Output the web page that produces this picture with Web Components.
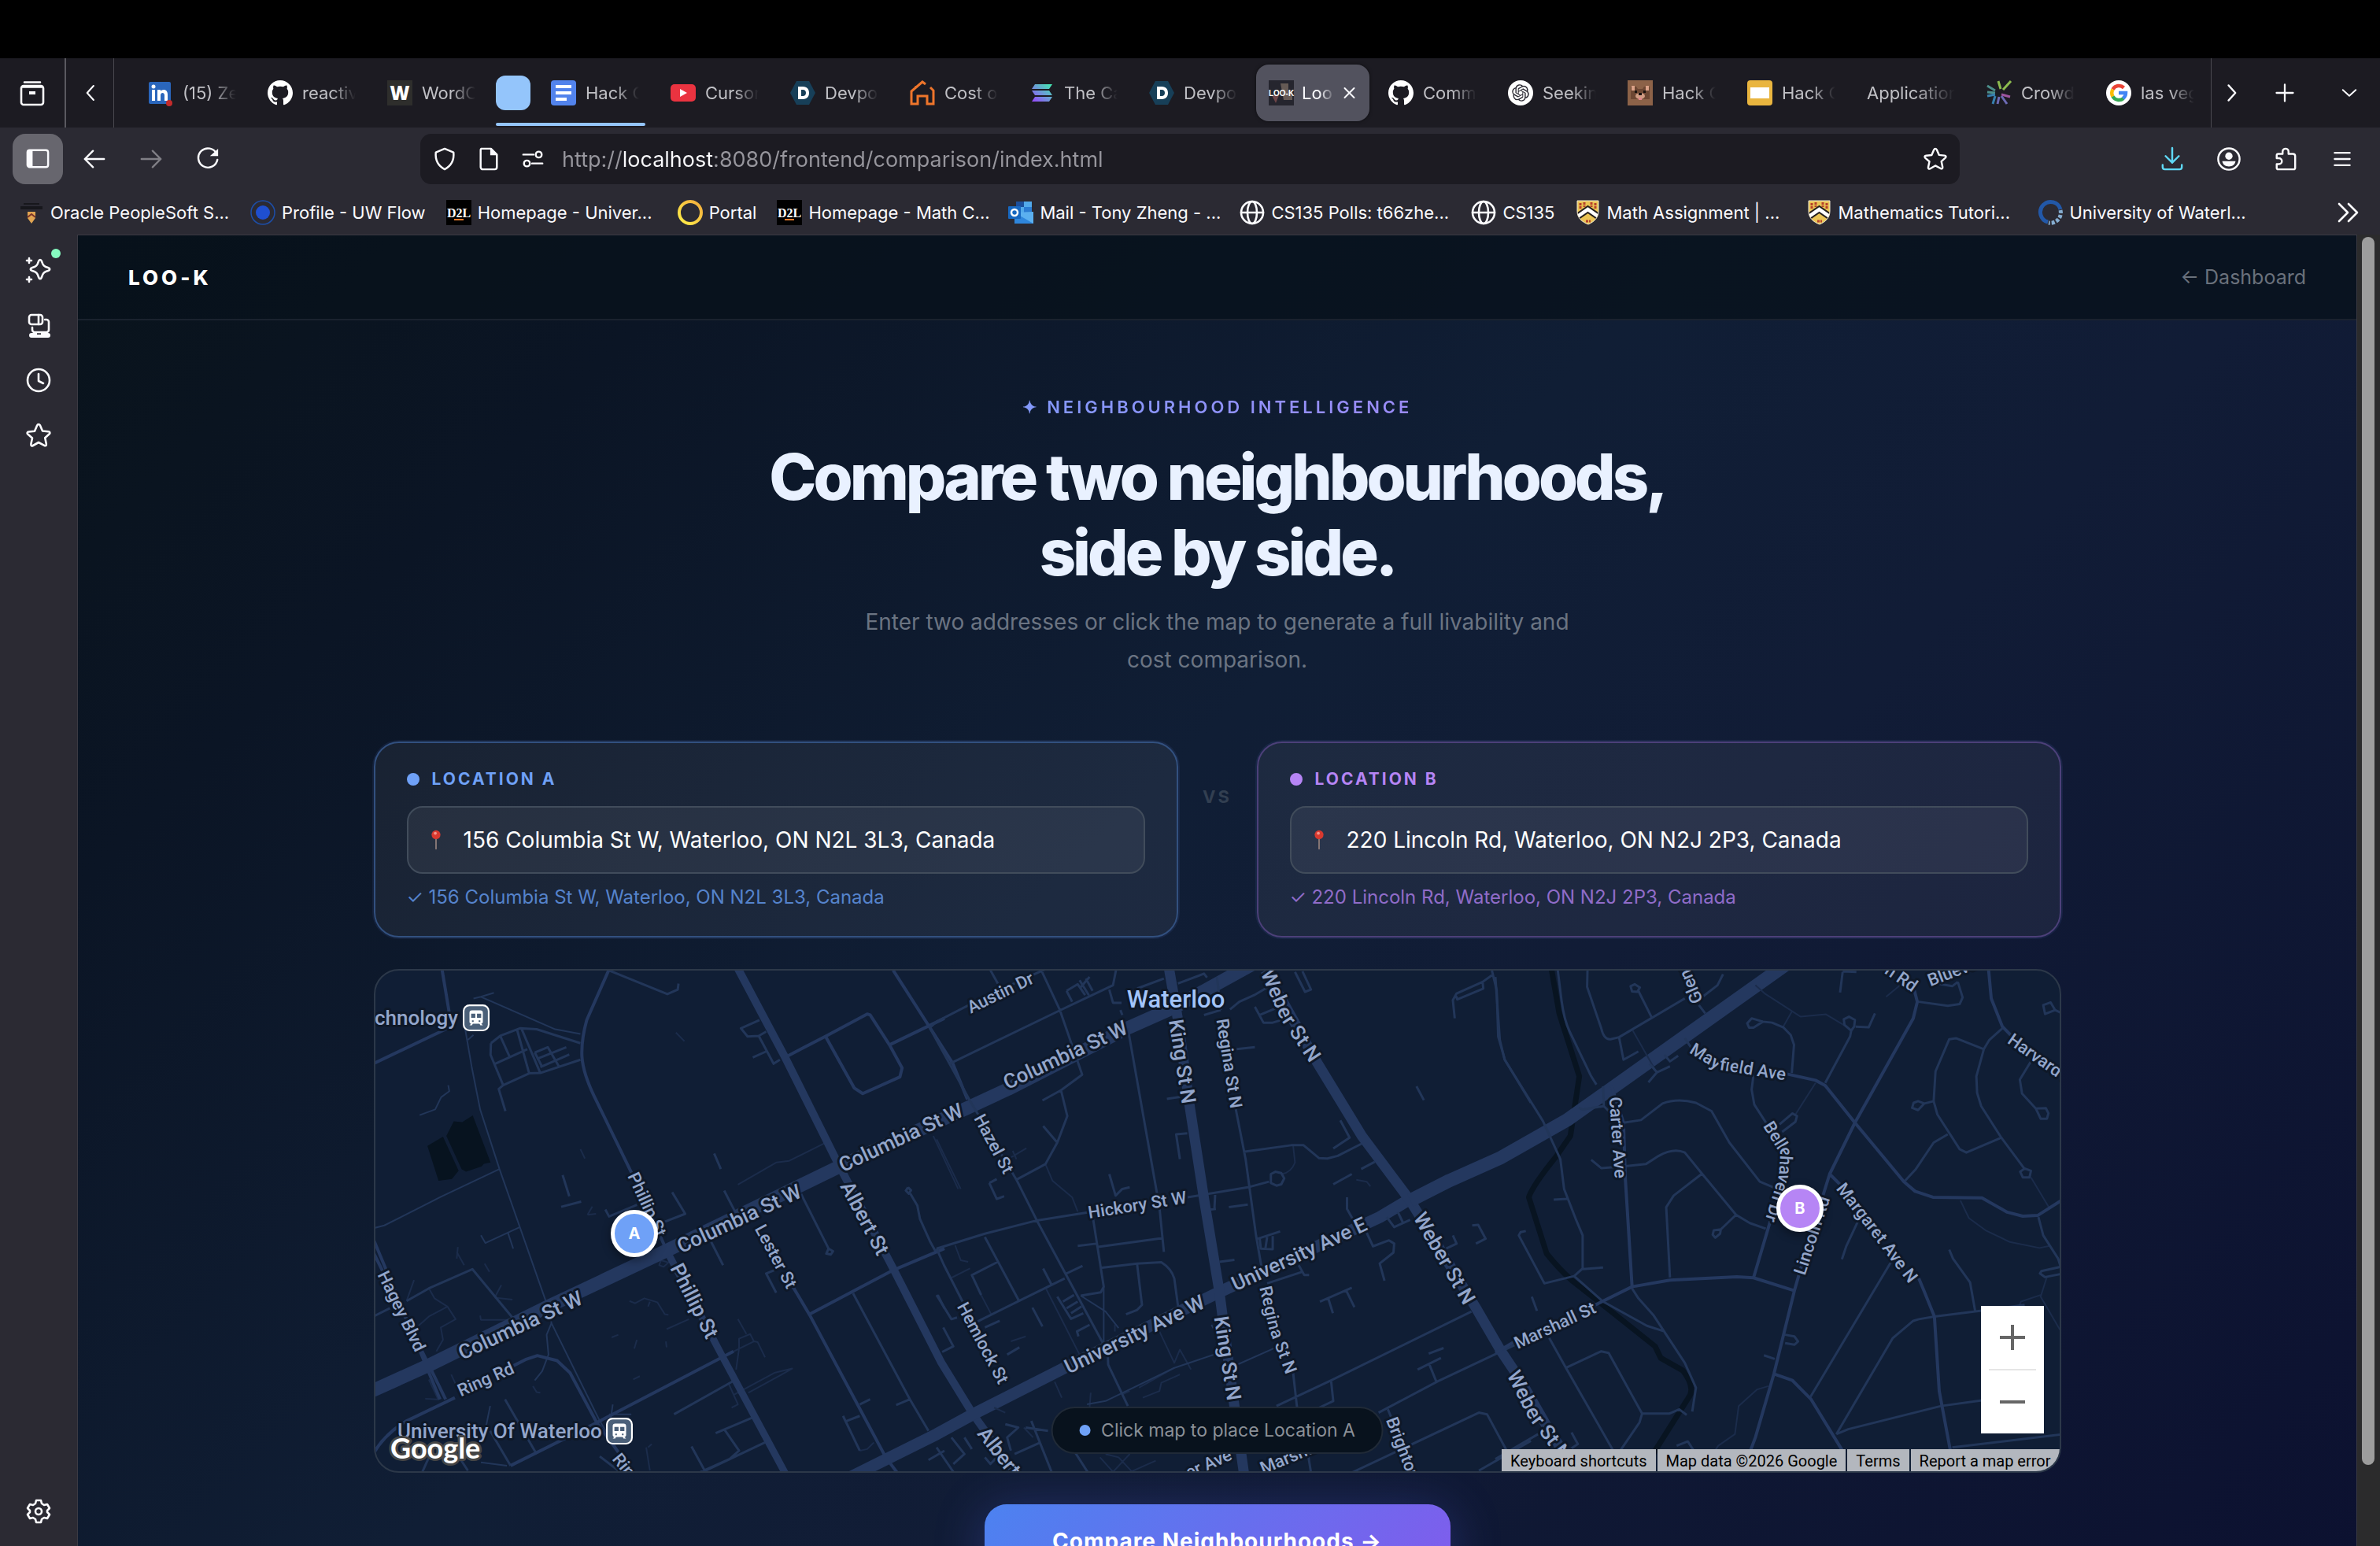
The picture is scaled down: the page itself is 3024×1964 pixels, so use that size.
<!DOCTYPE html>
<html lang="en">
<head>
<meta charset="utf-8">
<title>Loo-K | Compare neighbourhoods</title>
<style>
  html, body {
    margin: 0;
    height: 100%;
    overflow: hidden;
    background: #000;
    font-family: Inter, "Liberation Sans", sans-serif;
    color: #fbfbfe;
  }
</style>
</head>
<body>
<browser-window>
  <tab-strip slot="tabs">
    <tab-item icon="linkedin">(15) Ze</tab-item>
    <tab-item icon="github">reactiv</tab-item>
    <tab-item icon="wordc">WordC</tab-item>
    <tab-group><tab-item icon="docs">Hack C</tab-item></tab-group>
    <tab-item icon="youtube">Cursor</tab-item>
    <tab-item icon="devpost">Devpo</tab-item>
    <tab-item icon="house">Cost o</tab-item>
    <tab-item icon="solana">The Ca</tab-item>
    <tab-item icon="devpost">Devpo</tab-item>
    <tab-item icon="look" selected>Loo</tab-item>
    <tab-item icon="github">Comm</tab-item>
    <tab-item icon="openai">Seekin</tab-item>
    <tab-item icon="bear">Hack C</tab-item>
    <tab-item icon="slides">Hack C</tab-item>
    <tab-item>Application</tab-item>
    <tab-item icon="crowd">Crowd</tab-item>
    <tab-item icon="google">las veg</tab-item>
  </tab-strip>
  <nav-bar slot="nav"></nav-bar>
  <bookmark-bar slot="bookmarks">
    <bookmark-item icon="waterloo" long>Oracle PeopleSoft S...</bookmark-item>
    <bookmark-item icon="uwflow">Profile - UW Flow</bookmark-item>
    <bookmark-item icon="d2l" long>Homepage - Univer...</bookmark-item>
    <bookmark-item icon="portal">Portal</bookmark-item>
    <bookmark-item icon="d2l" long>Homepage - Math C...</bookmark-item>
    <bookmark-item icon="outlook" long>Mail - Tony Zheng - ...</bookmark-item>
    <bookmark-item icon="globe" long>CS135 Polls: t66zhe...</bookmark-item>
    <bookmark-item icon="globe">CS135</bookmark-item>
    <bookmark-item icon="crest" long>Math Assignment | ...</bookmark-item>
    <bookmark-item icon="crest" long>Mathematics Tutori...</bookmark-item>
    <bookmark-item icon="uwring" long>University of Waterl...</bookmark-item>
  </bookmark-bar>
  <side-rail slot="rail"></side-rail>

  <compare-page>
    <location-card slot="a" name="Location A" address="156 Columbia St W, Waterloo, ON N2L 3L3, Canada" style="--accent:#6fa1f7;--edge:#32507f;--note:#5583cc"></location-card>
    <location-card slot="b" name="Location B" address="220 Lincoln Rd, Waterloo, ON N2J 2P3, Canada" style="--accent:#b685f5;--edge:#4c4079;--note:#906cc9"></location-card>
    <city-map slot="map"></city-map>
  </compare-page>
</browser-window>

<script>
// Icons, all on a 32 x 32 grid
const line = 'fill="none" stroke="currentColor" stroke-width="2.6" stroke-linecap="round" stroke-linejoin="round"';
const githubMark = 'M16 0C7.2 0 0 7.2 0 16c0 7.1 4.6 13 10.9 15.200.8.1 1.100-.3 1.100-.8v-3c-4.500 1-5.400-1.900-5.400-1.900-.7-1.900-1.800-2.400-1.800-2.400-1.500-1 .1-1 .1-1 1.600.1 2.500 1.700 2.500 1.700 1.400 2.400 3.800 1.700 4.700 1.300.1-1 .6-1.700 1-2.100-3.600-.4-7.300-1.800-7.300-7.900 0-1.700.6-3.200 1.600-4.300-.2-.4-.7-2 .2-4.200 0 0 1.300-.4 4.400 1.600a15 15 0 0 1 8 0c3.100-2 4.400-1.600 4.400-1.600.9 2.200.3 3.800.2 4.200 1 1.100 1.600 2.600 1.600 4.300 0 6.100-3.700 7.500-7.300 7.900.6.5 1.100 1.500 1.100 3v4.400c0 .5.3 1 1.100.8C27.400 29 32 23.100 32 16 32 7.200 24.800 0 16 0z';
const openaiMark = 'M22.2819 9.8211a5.9847 5.9847 0 0 0-.5157-4.9108 6.0462 6.0462 0 0 0-6.5098-2.9A6.0651 6.0651 0 0 0 4.9807 4.1818a5.9847 5.9847 0 0 0-3.9977 2.9 6.0462 6.0462 0 0 0 .7427 7.0966 5.98 5.98 0 0 0 .511 4.9107 6.051 6.051 0 0 0 6.5146 2.9001A5.9847 5.9847 0 0 0 13.2599 24a6.0557 6.0557 0 0 0 5.7718-4.2058 5.9894 5.9894 0 0 0 3.9977-2.9001 6.0557 6.0557 0 0 0-.7475-7.0729zm-9.022 12.6081a4.4755 4.4755 0 0 1-2.8764-1.0408l.1419-.0804 4.7783-2.7582a.7948.7948 0 0 0 .3927-.6813v-6.7369l2.02 1.1686a.071.071 0 0 1 .038.052v5.5826a4.504 4.504 0 0 1-4.4945 4.4944zm-9.6607-4.1254a4.4708 4.4708 0 0 1-.5346-3.0137l.142.0852 4.783 2.7582a.7712.7712 0 0 0 .7806 0l5.8428-3.3685v2.3324a.0804.0804 0 0 1-.0332.0615L9.74 19.9502a4.4992 4.4992 0 0 1-6.1408-1.6464zM2.3408 7.8956a4.485 4.485 0 0 1 2.3655-1.9728V11.6a.7664.7664 0 0 0 .3879.6765l5.8144 3.3543-2.0201 1.1685a.0757.0757 0 0 1-.071 0l-4.8303-2.7865A4.504 4.504 0 0 1 2.3408 7.872zm16.5963 3.8558L13.1038 8.364 15.1192 7.2a.0757.0757 0 0 1 .071 0l4.8303 2.7913a4.4944 4.4944 0 0 1-.6765 8.1042v-5.6772a.79.79 0 0 0-.407-.667zm2.0107-3.0231l-.142-.0852-4.7735-2.7818a.7759.7759 0 0 0-.7854 0L9.409 9.2297V6.8974a.0662.0662 0 0 1 .0284-.0615l4.8303-2.7866a4.4992 4.4992 0 0 1 6.6802 4.66zM8.3065 12.863l-2.02-1.1638a.0804.0804 0 0 1-.038-.0567V6.0742a4.4992 4.4992 0 0 1 7.3757-3.4537l-.142.0805L8.704 5.459a.7948.7948 0 0 0-.3927.6813zm1.0976-2.3654l2.602-1.4998 2.6069 1.4998v2.9994l-2.5974 1.4997-2.6067-1.4997Z';
const icons = {
  archive: `<path ${line} d="M6 2.500h20M3 8.500h26M5 7h22a3 3 0 0 1 3 3v18a3 3 0 0 1-3 3H5a3 3 0 0 1-3-3V10a3 3 0 0 1 3-3z"/><rect x="12" y="14" width="8" height="4" fill="currentColor"/>`,
  left: `<path ${line} d="M22 5L12 16l10 11"/>`,
  right: `<path ${line} d="M12 5l10 11-10 11"/>`,
  down: `<path ${line} d="M5 11l11 10 11-10"/>`,
  plus: `<path ${line} d="M16 4v24M4 16h24"/>`,
  close: `<path ${line} d="M6 8l16 16M22 8L6 24"/>`,
  sidebar: `<rect x="2" y="4" width="28" height="23" rx="3" ${line}/><path d="M3 5h6v21H3z" fill="currentColor"/>`,
  back: `<path ${line} d="M29 16H3M14 5L3 16l11 11"/>`,
  forward: `<path ${line} d="M3 16h26M18 5l11 11-11 11"/>`,
  reload: `<path ${line} d="M28 9A13 13 0 1 0 29 17"/><path d="M30 2v10H19z" fill="currentColor"/>`,
  shield: `<path ${line} d="M16 2l12 5c1 10-3 18-12 23C7 25 3 17 4 7z"/>`,
  page: `<path ${line} d="M6 2h13l8 8v17a3 3 0 0 1-3 3H8a3 3 0 0 1-3-3V4a2 2 0 0 1 1-2z"/><path d="M18 2v9h9z" fill="currentColor"/>`,
  tune: `<g ${line}><path d="M3 10h14M15 22h14"/><circle cx="24" cy="10" r="4"/><circle cx="8" cy="22" r="4"/></g>`,
  star: `<path ${line} d="M16 2c1 0 1.500.6 2 1.500l3 7 7.500.8c2 .2 2.500 1.700 1.200 3l-5.500 5 1.600 7.500c.4 2-1 3-2.600 2L16 25l-7 4c-1.700 1-3 0-2.600-2L8 19.500l-5.700-5c-1.300-1.300-.8-2.800 1.200-3l7.500-.8 3-7C14.500 2.600 15 2 16 2z"/>`,
  download: `<path ${line} d="M16 1v20M7 12l9 9 9-9M3 24v3a3 3 0 0 0 3 3h20a3 3 0 0 0 3-3v-3"/>`,
  account: `<circle cx="16" cy="16" r="14.500" ${line}/><circle cx="16" cy="12" r="5" fill="currentColor"/><path d="M7 19h18c-1 5-4 7-9 7s-8-2-9-7z" fill="currentColor"/>`,
  puzzle: `<path ${line} d="M12 9V6a4 4 0 0 1 8 0v3h6a3 3 0 0 1 3 3v16a2 2 0 0 1-2 2H6a2 2 0 0 1-2-2v-5h3a4 4 0 0 0 0-8H4v-4a2 2 0 0 1 2-2z"/>`,
  menu: `<path ${line} d="M5 7h22M5 16h22M5 25h22"/>`,
  more: `<path ${line} d="M4 5l11 11L4 27M16 5l11 11-11 11"/>`,
  sparkle: `<path ${line} d="M18 3c1 0 1.500.7 2 2 1.500 5 3 6.500 8 8 3 1 3 3 0 4-5 1.500-6.500 3-8 8-1 3-3 3-4 0-1.500-5-3-6.500-8-8-3-1-3-3 0-4 5-1.500 6.500-3 8-8 .5-1.300 1-2 2-2z"/><path ${line} stroke-width="2" d="M4 1v6M1 4h6M4 25v6M1 28h6"/>`,
  devices: `<g ${line}><rect x="4" y="3" width="17" height="12" rx="3"/><path d="M16 3v12M24 9h2a3 3 0 0 1 3 3v10a3 3 0 0 1-3 3H11a3 3 0 0 1-3-3v-3"/></g><path d="M7 26h7v2h5v-2h9a3 3 0 0 1 0 6H7a3 3 0 0 1 0-6z" fill="currentColor"/>`,
  clock: `<circle cx="16" cy="16" r="14" ${line}/><path ${line} d="M16 8v9l6 3"/>`,
  gear: `<path ${line} d="M13 2h6l1 4 3 2 4-1 3 5-3 3v2l3 3-3 5-4-1-3 2-1 4h-6l-1-4-3-2-4 1-3-5 3-3v-2l-3-3 3-5 4 1 3-2z"/><circle cx="16" cy="16" r="4" ${line}/>`,
  globe: `<g ${line}><circle cx="16" cy="16" r="14"/><ellipse cx="16" cy="16" rx="6" ry="14"/><path d="M2 16h28"/></g>`,
  linkedin: `<rect x="1" y="2" width="28" height="28" rx="2" fill="#2a66bc"/><path fill="#fff" d="M5 12h4v14H5zM12 12h4v2c2-3 9-3 9 4v8h-4v-7c0-4-5-4-5 0v7h-4z"/><circle cx="7" cy="8" r="2.500" fill="#fff"/><circle cx="27" cy="29" r="4" fill="#c42b2b"/>`,
  github: `<path fill="#fff" d="${githubMark}"/>`,
  wordc: `<rect width="32" height="32" fill="#2e2e2c"/><text x="16" y="25" text-anchor="middle" font-family="Open Sans" font-weight="800" font-size="24" fill="#fff">W</text>`,
  docs: `<rect width="32" height="32" rx="4" fill="#5283ec"/><path fill="#fff" d="M6 6h20v4H6zM6 14h20v4H6zM6 22h14v4H6z"/>`,
  youtube: `<rect y="5" width="32" height="22" rx="5" fill="#ea3340"/><path fill="#fff" d="M12 11l9 5-9 5z"/>`,
  devpost: `<path fill="#173f58" d="M8 1h16l8 15-8 15H8L0 16z"/><path fill="#fff" fill-rule="evenodd" d="M10 8h6c6 0 8 4 8 8s-2 8-8 8h-6zM14 12v8h2c3 0 4-2 4-4s-1-4-4-4z"/>`,
  house: `<path fill="none" stroke="#ee752b" stroke-width="3" d="M8 10V7M20 5l-4-3L2 14v16h8V20h12v10h8V13l-4-4"/>`,
  solana: `<linearGradient id="g" x1="0" y1="1" x2="1" y2="0"><stop stop-color="#9945ff"/><stop offset="1" stop-color="#3ff0ae"/></linearGradient><path fill="url(#g)" d="M7 5h22l-4 6H3zM3 13h22l4 6H7zM7 21h22l-4 6H3z"/>`,
  look: `<rect width="32" height="32" fill="#25252e"/><path fill="#655a55" d="M15 4h10v9h5v12H19z"/><path fill="#6e4548" d="M4 19h9l-4 10z"/><text x="16" y="20" text-anchor="middle" font-family="Liberation Sans" font-weight="700" font-size="10" fill="#fff">LOO-K</text>`,
  openai: `<circle cx="16" cy="16" r="16" fill="#fff"/><path fill="#2b2a33" transform="translate(5.200 5.200) scale(.9)" d="${openaiMark}"/>`,
  bear: `<rect width="32" height="32" fill="#8c6248"/><path fill="#6d4733" d="M4 8h7l2 3h6l2-3h7v16H4z"/><path fill="#dba288" d="M5 7h4v6H5zM23 7h4v6h-4z"/><ellipse cx="16" cy="20" rx="6" ry="4" fill="#d19c84"/><path fill="#1a1210" d="M9 13h3v3H9zM20 13h3v3h-3zM14 16h4v3h-4z"/><path fill="#e0868a" d="M14 22h4v3h-4z"/>`,
  slides: `<rect width="32" height="32" rx="4" fill="#e9b53f"/><path fill="#fff" d="M4 9h24v14H4z"/>`,
  crowd: `<g stroke-width="3"><path stroke="#8dbb4f" d="M18 11l-3-10M21 12L31 1"/><path stroke="#4c8f8c" d="M1 7l10 6M1 15l10 1"/><path stroke="#377fae" d="M1 20l10-2M8 30l3-10"/><path stroke="#6d6bb5" d="M14 30l2-9M26 30l-7-10"/><path stroke="#9d559f" d="M19 18l11 3"/></g>`,
  google: `<circle cx="16" cy="16" r="16" fill="#fff"/><g fill="none" stroke-width="4.500"><path stroke="#ea4335" d="M8.500 11.500a9 9 0 0 1 14-2"/><path stroke="#fbbc05" d="M8.500 20.500a9 9 0 0 1 0-9"/><path stroke="#34a853" d="M22 23a9 9 0 0 1-13.500-2.500"/><path stroke="#4285f4" d="M16 16h9a9 9 0 0 1-3.500 7"/></g>`,
  waterloo: `<path fill="#17171c" d="M2 8h28v4H2zM6 4h20v2H6z"/><path fill="#e0a452" d="M11 15h10v8l-5 7-5-7z"/><path fill="none" stroke="#7d3528" stroke-width="2" d="M11 22l5-4 5 4"/>`,
  uwflow: `<circle cx="16" cy="16" r="15" fill="none" stroke="#1d4ea8" stroke-width="1.500"/><circle cx="16" cy="16" r="9" fill="#1f4fd0"/>`,
  d2l: `<rect width="32" height="32" fill="#000"/><text x="16" y="22" text-anchor="middle" font-family="Liberation Serif" font-weight="700" font-size="16" fill="#fff">D2L</text><path fill="#e87b2c" d="M10 24h12v2H10z"/>`,
  portal: `<linearGradient id="p" x1="0" y1="1" x2="1" y2="0"><stop stop-color="#fff04a"/><stop offset="1" stop-color="#f2ab3c"/></linearGradient><circle cx="16" cy="16" r="14" fill="none" stroke="url(#p)" stroke-width="4"/>`,
  outlook: `<path fill="#1c4f9c" d="M10 2h20v14H10z"/><path fill="#52a9ea" d="M20 2h10v7H20zM10 9h10v7H10z"/><path fill="#2b7cd3" d="M20 9h10v7H20z"/><path fill="#5bb0f0" d="M8 16l24-1v15H8z"/><path fill="#2f86dc" d="M8 16l24 14H8z"/><rect y="8" width="16" height="16" rx="1" fill="#1767c0"/><circle cx="8" cy="16" r="4" fill="none" stroke="#fff" stroke-width="2.500"/>`,
  crest: `<clipPath id="c"><path d="M2 1h27v13c0 9-6 14-13 17C8 28 2 23 2 14z"/></clipPath><g clip-path="url(#c)"><path fill="#eac454" d="M0 0h32v32H0z"/><path fill="none" stroke="#b5402c" stroke-width="3" stroke-dasharray="3 1" d="M6 4v8M11 3v6M20 3v6M25 4v8M13 27h6"/><path fill="none" stroke="#fff" stroke-width="7" d="M1 22l14.500-10L30 22"/><path fill="none" stroke="#26211d" stroke-width="2" d="M1 18l14.500-10L30 18M1 26l14.500-10L30 26"/></g><path fill="none" stroke="#f3ead0" d="M2 1h27v13c0 9-6 14-13 17C8 28 2 23 2 14z"/>`,
  uwring: `<g fill="none" stroke-width="5"><path stroke="#2258a8" d="M12 28A13 13 0 1 1 28 12"/><path stroke="#86add0" stroke-dasharray="4 2" d="M28 13a13 13 0 0 1-15 16"/></g>`,
  rail: `<rect x="1" y="1" width="30" height="30" rx="7" fill="#4b6079" stroke="#fff" stroke-width="2"/><path fill="#fff" fill-rule="evenodd" d="M11 7h10c2 0 3 1 3 3v11c0 1-1 2-2 2l2 2h-3l-1-2h-8l-1 2H8l2-2c-1 0-2-1-2-2V10c0-2 1-3 3-3zm-1 4v5h5v-5zm7 0v5h5v-5zm-6 8v2h2v-2zm8 0v2h2v-2z"/>`,
  pin: `<path stroke="#8b7a78" stroke-width="2" stroke-linecap="round" d="M16 15v13"/><circle cx="16" cy="9" r="6" fill="#d8392f"/><circle cx="15" cy="7" r="2" fill="#f3938a"/>`
};

/**
 * Defines a custom element whose shadow root is filled by a render function.
 */
function define(name, render) {
  customElements.define(name, class extends HTMLElement {
    constructor() {
      super();
      this.attachShadow({ mode: 'open' });
    }
    connectedCallback() {
      this.shadowRoot.innerHTML = render(this);
    }
  });
}

define('ui-icon', el => `
  <style>
    :host { display: block; flex: none; width: var(--icon, 32px); height: var(--icon, 32px); }
    svg { display: block; width: 100%; height: 100%; overflow: visible; }
  </style>
  <svg viewBox="0 0 32 32" aria-hidden="true">${icons[el.getAttribute('name')]}</svg>`);

// Icon-only button
define('icon-button', el => `
  <style>
    :host { display: block; flex: none; width: 72px; }
    button { all: unset; box-sizing: border-box; display: grid; place-items: center; width: 100%; height: 64px; border-radius: 16px; color: inherit; }
    :host([pressed]) button { background: #67666e; }
  </style>
  <button aria-label="${el.getAttribute('label')}"><ui-icon name="${el.getAttribute('icon')}"></ui-icon></button>`);

define('browser-window', () => `
  <style>
    :host { display: grid; grid-template-rows: 74px 88px 80px 56px minmax(0, 1fr); height: 100vh; background: #2b2a33; }
    .notch { background: #000; }
    .main { display: grid; grid-template-columns: 98px minmax(0, 1fr) 29px; min-height: 0; }
    .view { overflow: hidden; border: 1px solid #3b3a43; border-bottom: 0; }
    .scroll { background: #2b2b2c; padding: 3px 6px; }
    .thumb { height: 94%; border-radius: 8px; background: #9d9d9d; width: 16px; }
  </style>
  <div class="notch"></div>
  <slot name="tabs"></slot>
  <slot name="nav"></slot>
  <slot name="bookmarks"></slot>
  <div class="main">
    <slot name="rail"></slot>
    <div class="view"><slot></slot></div>
    <div class="scroll"><div class="thumb"></div></div>
  </div>`);

define('tab-strip', () => `
  <style>
    :host { display: flex; align-items: stretch; background: #1c1b22; }
    .end { display: flex; align-items: center; }
    .all { border-right: 2px solid #5a5960; padding: 0 5px; }
    .all icon-button { width: 72px; }
    .prev { border-right: 1px solid #4a4950; }
    .prev icon-button { width: 60px; --icon: 26px; }
    .tabs { flex: 1; min-width: 0; display: flex; padding-left: 23px; }
    .tools { border-left: 1px solid #4a4950; --icon: 28px; }
    .next { width: 50px; }
    .new { width: 86px; }
    .list { width: 78px; --icon: 24px; }
  </style>
  <div class="end all"><icon-button icon="archive" label="Firefox View"></icon-button></div>
  <div class="end prev"><icon-button icon="left" label="Scroll tabs left"></icon-button></div>
  <div class="tabs" role="tablist"><slot></slot></div>
  <div class="end tools">
    <icon-button class="next" icon="right" label="Scroll tabs right"></icon-button>
    <icon-button class="new" icon="plus" label="New tab"></icon-button>
    <icon-button class="list" icon="down" label="List all tabs"></icon-button>
  </div>`);

define('tab-item', el => {
  const icon = el.getAttribute('icon');
  const selected = el.hasAttribute('selected');
  return `
  <style>
    :host { display: block; flex: 0 1 152px; min-width: 0; padding: 8px 4px; box-sizing: border-box; width: 152px; }
    .tab { all: unset; box-sizing: border-box; width: 100%; height: 72px; display: flex; align-items: center; gap: 12px; padding: 0 16px; border-radius: 16px; font-size: 22px; color: #c0c0c5; }
    .label { flex: 1; min-width: 0; overflow: hidden; white-space: nowrap; -webkit-mask-image: linear-gradient(90deg, #000 55%, transparent); mask-image: linear-gradient(90deg, #000 55%, transparent); }
    :host([selected]) .tab { background: #52525e; color: #fbfbfe; gap: 8px; padding-right: 12px; box-shadow: 0 0 4px #0008; }
    :host([selected]) .label { padding-left: 2px; }
    .x { --icon: 24px; }
  </style>
  <button class="tab" role="tab" aria-selected="${selected}">
    ${icon ? `<ui-icon name="${icon}"></ui-icon>` : ''}
    <span class="label"><slot></slot></span>
    ${selected ? '<ui-icon class="x" name="close"></ui-icon>' : ''}
  </button>`;
});

define('tab-group', () => `
  <style>
    :host { display: flex; align-items: center; position: relative; padding-left: 6px; }
    button { all: unset; width: 44px; height: 44px; border-radius: 12px; margin-right: 6px; background: #94c5fb; }
    :host::after { content: ""; position: absolute; left: 6px; right: 12px; bottom: 2px; height: 4px; border-radius: 2px; background: #94c5fb; }
  </style>
  <button aria-label="Tab group"></button><slot></slot>`);

define('nav-bar', () => `
  <style>
    :host { display: flex; align-items: center; padding: 0 12px 0 16px; --icon: 30px; }
    .side { width: 64px; margin-right: 4px; }
    .off { color: #807f86; }
    .url { flex: 1; margin: 0 234px; height: 64px; border-radius: 14px; background: #1c1b22; display: flex; align-items: center; gap: 26px; padding: 0 16px; }
    .url input { all: unset; flex: 1; min-width: 0; height: 64px; font-size: 27px; color: transparent; margin-left: -4px;
      background: linear-gradient(90deg, #97969d 76px, #fbfbfe 76px 192px, #97969d 192px); -webkit-background-clip: text; background-clip: text; }
    .dl { color: #5fd8f5; }
    .menu { --icon: 28px; }
  </style>
  <icon-button class="side" pressed icon="sidebar" label="Show sidebar"></icon-button>
  <icon-button icon="back" label="Back"></icon-button>
  <icon-button class="off" icon="forward" label="Forward"></icon-button>
  <icon-button icon="reload" label="Reload"></icon-button>
  <div class="url">
    <ui-icon name="shield"></ui-icon>
    <ui-icon name="page"></ui-icon>
    <ui-icon name="tune"></ui-icon>
    <input aria-label="Address" value="http://localhost:8080/frontend/comparison/index.html">
    <ui-icon name="star"></ui-icon>
  </div>
  <icon-button class="dl" icon="download" label="Downloads"></icon-button>
  <icon-button icon="account" label="Account"></icon-button>
  <icon-button icon="puzzle" label="Extensions"></icon-button>
  <icon-button class="menu" icon="menu" label="Open menu"></icon-button>`);

define('bookmark-bar', () => `
  <style>
    :host { display: flex; align-items: center; padding: 0 4px 0 24px; }
    nav { flex: 1; min-width: 0; display: flex; gap: 26px; }
  </style>
  <nav aria-label="Bookmarks"><slot></slot></nav>
  <icon-button icon="more" label="More bookmarks"></icon-button>`);

// "long" titles are the ones cut at the widest label the bar allows
define('bookmark-item', el => `
  <style>
    :host { display: block; flex: none; }
    a { display: flex; align-items: center; gap: 8px; color: #fbfbfe; text-decoration: none; font-size: 22px; line-height: 32px; white-space: nowrap; }
    :host([long]) span { width: 228px; }
  </style>
  <a href="#"><ui-icon name="${el.getAttribute('icon')}"></ui-icon><span><slot></slot></span></a>`);

define('side-rail', () => `
  <style>
    :host { display: flex; flex-direction: column; padding: 10px 0 9px; box-sizing: border-box; }
    .item { height: 70px; display: grid; place-items: center; position: relative; }
    .item:last-child { margin-top: auto; }
    .dot { position: absolute; right: 21px; top: 8px; width: 12px; height: 12px; border-radius: 50%; background: #86fbc0; }
  </style>
  <div class="item"><icon-button icon="sparkle" label="AI chat"></icon-button><span class="dot"></span></div>
  <div class="item"><icon-button icon="devices" label="Synced tabs"></icon-button></div>
  <div class="item"><icon-button icon="clock" label="History"></icon-button></div>
  <div class="item"><icon-button icon="star" label="Bookmarks"></icon-button></div>
  <div class="item"><icon-button icon="gear" label="Customize sidebar"></icon-button></div>`);

define('compare-page', () => `
  <style>
    :host { display: block; min-height: 100%; background: linear-gradient(135deg, #09131b 0%, #0b1525 18%, #101e35 45%, #111c36 62%, #0c1130 100%); }
    header { height: 106px; display: flex; align-items: center; justify-content: space-between; padding: 0 64px; border-bottom: 2px solid #1a222e; background: rgba(7, 17, 27, .8); }
    .logo { font-size: 26px; font-weight: 800; letter-spacing: 4px; color: #fff; }
    header a { font-size: 25px; color: #6a717c; text-decoration: none; }
    .hero { padding-top: 96px; text-align: center; }
    .eyebrow { margin: 0; font-size: 22px; line-height: 28px; font-weight: 600; letter-spacing: 4px; }
    .eyebrow span { background: linear-gradient(90deg, #8399fb, #9b8bf7); -webkit-background-clip: text; background-clip: text; color: transparent; }
    h1 { margin: 27px auto 16px; font-size: 81px; line-height: 96px; font-weight: 800; letter-spacing: -4px; color: #e9f1ff; }
    .lead { margin: 0 auto; max-width: 960px; font-size: 28px; line-height: 48px; color: #6b7482; }
    main { max-width: 2144px; margin: 80px auto 0; }
    .pair { display: grid; grid-template-columns: 1fr 100px 1fr; }
    .vs { text-align: center; padding-top: 56px; font-size: 22px; line-height: 28px; font-weight: 700; letter-spacing: 3px; color: #323f51; }
    .go { display: flex; justify-content: center; margin-top: 40px; }
    .go button { border: 0; width: 592px; height: 94px; border-radius: 28px; font: 700 28px/34px Inter, sans-serif; letter-spacing: 1px; color: #fff; background: linear-gradient(135deg, #4c82f0, #805cec); box-shadow: 0 8px 64px rgba(90, 100, 240, .3); }
  </style>
  <header><span class="logo">LOO-K</span><a href="#">← Dashboard</a></header>
  <section class="hero">
    <p class="eyebrow"><span>✦ NEIGHBOURHOOD INTELLIGENCE</span></p>
    <h1>Compare two neighbourhoods,<br>side by side.</h1>
    <p class="lead">Enter two addresses or click the map to generate a full livability and<br>cost comparison.</p>
  </section>
  <main>
    <div class="pair"><slot name="a"></slot><div class="vs">VS</div><slot name="b"></slot></div>
    <slot name="map"></slot>
    <div class="go"><button>Compare Neighbourhoods →</button></div>
  </main>`);

define('location-card', el => `
  <style>
    :host { display: block; box-sizing: border-box; border: 2px solid var(--edge); border-radius: 32px; padding: 32px 40px 35px; background: rgba(255, 255, 255, .055); box-shadow: 0 0 0 2px rgba(100, 130, 230, .1); }
    label { display: flex; align-items: center; gap: 16px; font-size: 21px; line-height: 28px; font-weight: 700; letter-spacing: 3px; color: var(--accent); text-transform: uppercase; }
    label::before { content: ""; width: 16px; height: 16px; border-radius: 50%; background: var(--accent); }
    .field { display: flex; align-items: center; gap: 20px; height: 82px; margin: 20px 0 16px; padding: 0 20px; border: 2px solid #414c5b; border-radius: 20px; background: rgba(255, 255, 255, .06); --icon: 30px; }
    input { all: unset; flex: 1; min-width: 0; font-size: 28px; color: #fff; }
    p { margin: 0; font-size: 24px; line-height: 28px; color: var(--note); }
  </style>
  <label for="address">${el.getAttribute('name')}</label>
  <div class="field"><ui-icon name="pin"></ui-icon><input id="address" value="${el.getAttribute('address')}"></div>
  <p>✓ ${el.getAttribute('address')}</p>`);

// The map is drawn in three tiles, each 740 x 660 and plotted on a 1568 grid
const TILE = [460, 1190, 1900];
const SX = 740 / 1568, SY = 660 / 1568;
const at = (tile, x, y) => [Math.round(TILE[tile] + x * SX), Math.round(1220 + y * SY)];

// Per tile: streets by stroke width, then the faint service lanes
const roads = [
  [{
    17: 'M-10 1318L180 1222 500 1045 822 875 1280 625 1640 440 1740 388 2060 205 2190 140 2400 10',
    10: 'M1005 10L1140 295 1280 610 1430 930 1560 1215 1645 1370 1780 1580',
    9: 'M822 880L970 1195 1145 1560',
    15: 'M1300 1568L1547 1430 1645 1370 1900 1225 2310 1000 2740 775 2815 725',
    4: 'M215 25L238 180 225 208 30 312M664 30L605 180Q590 240 592 290 595 340 625 410L725 640 822 880M30 840L210 1325M30 880L175 1210 225 1325M30 1490Q60 1430 120 1390L250 1320M405 1225L440 1205 472 1193 525 1208 560 1245 632 1395 700 1500M632 1395L1000 1180M632 1395L400 1525M1160 985L1205 1070 1410 1500 1440 1545M1205 1068L1430 935 1568 870M1140 292L1250 228 1360 162 1368 165 1420 255 1454 325 1448 352 1348 402 1325 385 1248 230M1420 255L1568 175M1430 30L1590 310 1630 420',
    3: 'M120 1028L180 990 297 932 410 1085M664 30L822 102 850 88 852 70M347 250L372 228 425 205 470 208 588 250M347 250L346 285 380 377 450 341 480 340 588 300M372 228L397 290M355 314L445 268M418 212L450 341M430 208L480 340M380 377L368 388 386 455M465 278L500 262 530 320M470 298L550 262M480 322L558 284M465 278L485 322M835 700L870 765 812 790M655 752L665 773 740 738M540 648L558 712M536 744L590 728M948 583L966 630M975 695L1005 760M1182 705L1256 870 1250 885 1262 888 1268 878 1256 870M1470 685L1464 695 1472 704 1478 694 1470 685M1476 704L1495 740 1502 780 1530 850 1545 880M940 850L972 920M1115 1003L1088 945 1110 935M1070 180L1020 205 1038 230 1068 228 1108 312 1125 300M1068 228L1088 215M1052 293L1088 275M840 1370L1002 1268M952 1427L1055 1378M975 1415L1015 1480 990 1505 880 1560M887 1467L925 1545M1295 1375L1340 1480M1305 1390L1340 1375M1340 1340L1368 1325M1438 1342L1475 1325M1322 1005L1475 1325 1525 1420M1550 1010L1568 1050M640 1497L690 1540M385 1325L470 1490M345 1420L400 1525M160 1550L180 1500M250 1480L285 1540M925 1540L1085 1455M1525 1508L1568 1480M30 1075L75 1050',
    2: 'M275 190L295 320 318 450 370 630 500 1045 510 1095 640 1390 700 1500M32 808L60 800 210 715 370 630M320 830L332 853 425 805M393 823L407 870M320 110L520 208 588 222M320 110L355 98M300 115L320 110M285 240L300 225M510 1095L497 1130 502 1190 485 1240 465 1268M155 467L197 450 213 413 235 395 232 377M320 1515L390 1525M345 1345L335 1400 310 1440M675 1340L670 1380M665 1370L725 1370'
  },
  'M180 990L195 1020 230 1045 252 1083 212 1108 218 1145 200 1180M230 1045L180 1075 150 1105M357 1018L375 980M357 1018L405 1024M255 900L258 865M255 880L275 920M140 965L120 1028M318 1072L320 1085 400 1085M330 915L343 940M1012 677L1115 610 1150 605 1245 552M845 218L868 244M588 570L600 598M720 1028L735 1035 760 1020 795 1032 815 1068 825 1070M775 1030L770 1045M820 1113L880 1083M975 1195L1015 1172 1055 1150 1065 1152 1085 1198M1015 1172L1015 1142 1045 1128 1055 1150M1015 1172L1007 1235M1012 1083L1035 1128M1000 1312L1110 1245 1158 1232 1130 1250 1040 1305M988 1280L1012 1340 995 1350M740 1145L733 1172M818 1150L820 1168M672 1138L690 1130M730 1265L748 1255M765 1470L775 1540M770 1470L780 1460M180 1265L205 1325 170 1323M240 1250L265 1310M460 1285L470 1303 480 1305M607 768L630 765M607 768L620 743M1538 530L1605 690M1340 1480L1360 1475 1378 1455M800 920L812 925 825 912 805 905z'
  ],
  [{
    13: 'M625 20L650 180 680 430 720 720 760 990 800 1330 830 1568M885 30L1020 300 1145 530 1275 725 1450 1045 1520 1180 1568 1260 1650 1420 1750 1590',
    17: 'M1275 725L1380 665 1520 595 1590 550 1700 480 2020 225 2290 10',
    3: 'M-20 205L0 185 130 110 290 28M35 312L330 152 475 75 483 30M282 30L332 150 392 345 335 392 352 470 325 550 293 615 215 662M335 392L285 423M287 500L325 550M-20 200L88 420 215 662 270 785 450 1160M0 870L130 825 270 785 410 760M676 715L838 685 895 668M804 440L832 600 860 830 880 960M960 1245L970 1345 1000 1490 1010 1560M826 578L955 558 988 558 1030 597 1052 598 1080 590 1145 553M900 645L912 638 928 642 936 658 928 676 915 680 900 672zM420 770L450 985 442 1002 388 1012M435 865L610 838M380 862L430 855M445 928L540 915 605 911Q632 930 640 960L652 1060M540 918L553 1040 540 1055 510 1068M515 205L600 745 612 880M0 870L20 920 70 1030M130 835L222 1028 110 1090M222 1028L345 960M165 910L95 950 120 1010M350 945L393 922M287 930L310 980M258 1048L285 1105M540 85L612 55M650 70L720 40 728 52M755 50L765 150M465 88L475 128 498 128M495 150L500 165M350 92L365 125M350 92L380 72 400 105M385 60L410 105M402 55L420 92M412 50L385 85M620 418L655 412M808 268L857 262M655 600L645 525 675 522M142 672L162 660M142 672L162 720 182 712M465 645L482 710 500 690 520 685M787 745L838 737M750 708L748 750M738 752L752 750M762 910L802 904M865 840L925 818M870 840L873 870 905 872 905 832M890 835L885 872M857 140L880 188 905 188 935 178M870 165L912 145M790 148L815 125 855 105 890 82M720 165L765 150M965 35L992 95 1008 88 985 33M1395 175L1390 120 1400 100 1470 65 1495 45M1397 103L1402 118 1472 85 1470 65M1495 30L1508 90 1512 230 1530 300 1600 430M1292 380L1312 422M1087 483L1112 535 1068 568M1068 676L1118 645M1143 630L1180 608M1105 715L1105 750 1130 800M1155 815L1175 863 1218 845 1232 855 1230 882 1193 915 1206 967M1212 775L1232 805 1275 783M1242 760L1255 790M1390 830L1400 855 1372 870M1442 800L1458 798 1478 840 1452 855M975 920L990 950 1003 950M890 975L985 940M1032 1030L1118 988M1055 1022L1067 1065M1103 997L1125 1047M915 1345L1062 1268 1440 1060M1062 1268L1068 1330 1030 1350M1190 1365L1350 1270 1568 1155M1215 1355L1228 1390M1295 1235L1358 1200M1325 1215L1345 1270M1325 1187L1365 1170M1120 1545L1460 1365 1482 1370 1540 1490M1460 1540L1600 1450M460 1160L462 1220 515 1345M0 1010L40 1083 55 1078M18 1108L45 1165 15 1182M130 1108L170 1088M190 1190L223 1168M325 1015L362 1082 395 1065M340 1030L370 1010M350 1050L380 1030M362 1065L390 1045M412 1100L378 1120 382 1135M0 1470L55 1560M40 1440L75 1490 45 1520M75 1440L95 1475M130 1500L145 1520 180 1480M185 1400L220 1410 190 1440 200 1480M255 1390L310 1545M210 1490L280 1455M370 1480L410 1550M240 1410L300 1420M145 30L165 70',
    2: 'M450 1160L450 985M405 1340L455 1330 640 1230 760 1185M810 1220L950 1150M388 1012L455 1060 490 1110M740 1100L745 1110'
  },
  'M293 615L312 665 365 715 380 758M0 540L65 690M200 595L242 567M205 575L215 600M960 560L965 610Q955 640 930 645M1130 662L1158 668 1168 682M295 992L385 1190M600 1120L640 1215 655 1175 685 1235M480 1100L480 1120M545 1290L640 1230M555 1320L600 1300 605 1275 655 1250M500 1310L520 1300M415 1305L412 1350M318 1272L337 1320M155 1350L185 1365M235 1410L260 1440M455 1490L490 1500 540 1560M470 1550L520 1490M520 1545L590 1510M440 1500L480 1550M50 860L65 905 85 910M40 958L90 930M120 1010L148 1070M200 1150L240 1135'
  ],
  [{
    3: 'M0 50L12 240 25 300 128 485 175 600 185 690 218 785 235 830 235 930 212 953 132 975 63 830 68 820 82 817M157 722L193 720M235 932L290 927M168 30L178 120Q185 180 200 215L258 350 272 375M248 30L247 80 285 205Q292 240 310 238L333 232 510 115M333 232L345 300 385 275M422 175L385 92M375 72L364 78 368 94 382 95 389 82zM548 135L565 160M560 108L598 75 613 42M455 285L470 305 492 288M412 368L435 338 470 320M415 312L435 338M290 380L292 440 235 450 225 445M292 440L310 460M345 490L392 482 450 432Q490 415 540 430L582 455 630 550 712 668 755 688M258 602L285 627 345 622 405 615 440 590Q480 565 510 580L555 642 648 768 685 793 728 810M555 645L480 710 460 745 470 957M648 768L607 812 605 825 592 837 585 828 588 815 607 812M695 345L690 390 697 435 740 510M765 495L800 462 812 470 808 487 772 518M510 235L540 285M888 370L955 230 958 212 940 195 938 178 952 170 968 180 966 200 958 212M970 200L1005 202 1022 160M720 185L690 175 678 190 683 203 695 203 720 185 745 188 775 202 795 225 804 255 798 340M1140 125L1218 137 1250 132 1258 112 1245 65M1365 205L1330 240 1315 268 1295 350 1297 400 1308 440 1362 535 1425 630M1425 628L1413 638 1420 655 1438 655 1442 635zM1315 268L1240 235 1222 238 1185 335 1180 425 1190 465 1250 570 1268 580 1362 535M1180 425L1155 432 1138 425 1126 430 1122 445 1138 452 1155 432M1218 525L1180 550 1132 630 1103 665M1450 290L1412 360 1418 402 1455 447 1482 446 1489 462 1485 478 1468 478 1455 447M1475 135L1495 127 1507 150 1480 162zM1507 150L1530 162M1462 775L1475 830 1515 900 1522 925 1470 938 1466 945 1480 956 1530 945M1222 873L1232 900 1278 972 1292 1060M975 790L945 862 933 902M1068 905L848 1318M918 1430L950 1415 1200 1345 1310 1328M1230 1470L1530 1430M780 1130L805 1135 815 1150 805 1160 780 1155M723 1192L752 1203M368 990L385 1020 425 1070 510 1215 540 1290 530 1362M212 953L290 1030 408 1103 455 1120M145 1140L190 1230 325 1495M190 1230L285 1180 305 1185 395 1368 468 1368 495 1355 515 1372M395 1368L388 1395 330 1490M98 1015L112 1058M0 1505L115 1430M205 1425L222 1460 195 1480M488 1465L518 1452 540 1490M935 35L928 97M935 33L972 35M1190 70L1230 78 1245 65M1182 1075L1140 1083 1125 1088 1070 1140 918 1430M1182 1075L1305 1058 1425 1040',
    4: 'M312 378L345 490 350 660 368 985 470 965 650 955 695 958 805 997M785 343L862 362 888 378 968 490 1100 668 1130 697 1178 715 1310 717 1378 760 1420 772 1460 770 1530 720M1128 90L1136 125 1125 175 968 490 900 645 840 860 805 997 750 1248 700 1440 680 1500M900 645L940 690M740 788L695 958M1140 960L1155 1000 1182 1075 1195 1300 1225 1480M1328 30L1335 115 1365 200 1400 240M750 1248L800 1268 850 1325 940 1490M0 1185L60 1145M260 1045L368 985'
  },
  'M700 75L725 100 822 170 890 163 945 200M798 155L775 200M862 370L808 465M370 212L430 330M1090 75L1052 110M1252 725L1275 778 1320 815 1385 850 1465 868 1492 862M1442 655L1490 745M735 1285L705 1295 655 1345 645 1430 600 1465 580 1500M1485 955L1468 1015 1520 1115M1468 1010L1415 1030 1405 1060'
  ]
];

// [text, tile, size, points of the centre line, anchor]
const streets = [
  ['Columbia St W', 0, 26, [858, 862, 1172, 695]],
  ['Columbia St W', 0, 26, [268, 1184, 584, 1020]],
  ['Columbia St W', 0, 26, [1292, 618, 1608, 452]],
  ['Columbia St W', 1, 26, [188, 366, 505, 205]],
  ['Phillip St', 0, 22, [728, 645, 808, 830]],
  ['Phillip St', 0, 26, [846, 920, 946, 1135]],
  ['Lester St', 0, 22, [1070, 800, 1160, 985]],
  ['Albert St', 0, 26, [1303, 670, 1404, 885]],
  ['Hagey Blvd', 0, 22, [55, 940, 158, 1175]],
  ['Ring Rd', 0, 22, [262, 1300, 402, 1228]],
  ['Ring Rd', 0, 22, [685, 1495, 790, 1640], 'start'],
  ['Austin Dr', 1, 22, [88, 143, 255, 52]],
  ['King St N', 1, 26, [645, 180, 680, 430]],
  ['King St N', 1, 26, [768, 1075, 800, 1328]],
  ['Regina St N', 1, 22, [770, 178, 808, 445]],
  ['Regina St N', 1, 22, [885, 985, 912, 1110, 955, 1245]],
  ['Weber St N', 1, 26, [890, 30, 945, 170, 1022, 300]],
  ['Weber St N', 1, 26, [1297, 762, 1438, 1035]],
  ['Weber St N', 2, 26, [48, 1245, 105, 1370, 190, 1500]],
  ['Hazel St', 1, 22, [112, 465, 197, 642]],
  ['Hickory St W', 1, 22, [410, 760, 672, 715]],
  ['Hemlock St', 1, 22, [68, 1033, 182, 1275]],
  ['University Ave W', 1, 26, [350, 1230, 716, 1027]],
  ['University Ave E', 1, 26, [797, 980, 1155, 790]],
  ['Albert St', 1, 26, [122, 1415, 225, 1560], 'start'],
  ['Brighton St', 1, 22, [1225, 1380, 1290, 1568], 'start'],
  ['er Ave', 1, 22, [680, 1545, 785, 1493]],
  ['Marshall St', 1, 22, [872, 1535, 1075, 1440], 'start'],
  ['Glenn', 2, 22, [545, 128, 490, -20], 'start'],
  ['n Rd', 2, 22, [1052, 18, 1135, 85]],
  ['Bluevale', 2, 22, [1165, 62, 1310, 0], 'start'],
  ['Mayfield Ave', 2, 22, [528, 262, 600, 312, 690, 328, 785, 345]],
  ['Harvard Rd', 2, 22, [1385, 232, 1560, 370], 'start'],
  ['Carter Ave', 2, 22, [322, 412, 338, 658]],
  ['Bellehaven Dr', 2, 22, [733, 490, 785, 580, 780, 650, 742, 788]],
  ['Lincoln Rd', 2, 22, [818, 945, 885, 715]],
  ['Margaret Ave N', 2, 22, [925, 675, 1015, 800, 1130, 970]],
  ['Marshall St', 2, 22, [50, 1160, 270, 1042]]
];

/** Street name along a straight or bent centre line. */
function streetLabel([text, tile, size, pts, anchor], i) {
  const p = [];
  for (let k = 0; k < pts.length; k += 2) p.push(at(tile, pts[k], pts[k + 1]));
  if (p.length === 2) {
    const [[x1, y1], [x2, y2]] = p;
    const angle = Math.round(Math.atan2(y2 - y1, x2 - x1) * 180 / Math.PI);
    const [x, y] = anchor ? p[0] : [(x1 + x2) / 2, (y1 + y2) / 2];
    return `<text font-size="${size}" dy=".35em" text-anchor="${anchor || 'middle'}" transform="translate(${x} ${y}) rotate(${angle})">${text}</text>`;
  }
  // run past both ends so the first and last letters keep a path under them
  const past = (a, b) => [2 * a[0] - b[0], 2 * a[1] - b[1]];
  const full = [past(p[0], p[1]), ...p, past(p[p.length - 1], p[p.length - 2])];
  const len = q => q.slice(1).reduce((s, b, k) => s + Math.hypot(b[0] - q[k][0], b[1] - q[k][1]), 0);
  const middle = Math.round(len(full.slice(0, 2)) + len(p) / 2);
  return `<path id="street${i}" d="M${full.join('L')}"/>
    <text font-size="${size}" text-anchor="middle"><textPath href="#street${i}" startOffset="${middle}"><tspan dy=".35em">${text}</tspan></textPath></text>`;
}

function roadLayer() {
  return roads.map(([widths, lanes], i) => `
    <g transform="translate(${TILE[i]} 1220) scale(${SX} ${SY})">
      <path class="lane" stroke-width="2" d="${lanes}"/>
      ${Object.entries(widths).map(([w, d]) => `<path class="${w < 4 ? 'local' : 'road'}" stroke-width="${w}" d="${d}"/>`).join('')}
    </g>`).join('');
}

define('city-map', () => `
  <style>
    :host { display: block; position: relative; margin-top: 40px; height: 636px; border: 2px solid #2c3849; border-radius: 32px; overflow: hidden; background: #101e35; }
    svg.map { display: block; width: 100%; height: 100%; font-family: Roboto, sans-serif; font-weight: 500; }
    path { vector-effect: non-scaling-stroke; }
    .map path { fill: none; stroke-linejoin: round; }
    .road { stroke: #24385f; }
    .local { stroke: #223659; }
    .lane { stroke: #1b2c4b; }
    .water { stroke: #081421; }
    .map .field { fill: #07131f; }
    .names text { fill: #93a6cb; stroke: #0e1828; stroke-width: 6px; paint-order: stroke; stroke-linejoin: round; }
    .names .city { fill: #a3c5fa; }
    .names .brand { font-family: Lato, sans-serif; font-weight: 700; fill: #fff; stroke: #454545; }
    .map .stop path { fill: #fff; }
    .marker { all: unset; position: absolute; box-sizing: border-box; width: 60px; height: 60px; border: 5px solid #fff; border-radius: 50%; color: #fff; font-weight: 700; font-size: 20px; display: grid; place-items: center; transform: translate(-50%, -50%); box-shadow: 0 4px 12px #0006; }
    .a { left: 15.4%; top: 334px; background: #6fa1f7; }
    .b { left: 84.6%; top: 302px; background: #b685f5; }
    .hint { position: absolute; left: 50%; bottom: 22px; transform: translateX(-50%); display: flex; align-items: center; gap: 14px; height: 56px; padding: 0 34px; border: 2px solid #202a37; border-radius: 30px; background: #08121d; color: #8b9097; font-size: 23px; white-space: nowrap; }
    .hint::before { content: ""; width: 14px; height: 14px; border-radius: 50%; background: #6fa1f7; }
    .zoom { position: absolute; right: 20px; bottom: 48px; width: 80px; background: #fff; display: flex; flex-direction: column; align-items: center; }
    .zoom button { all: unset; height: 80px; width: 60px; display: grid; place-items: center; }
    .zoom button + button { border-top: 2px solid #e6e6e6; }
    .zoom svg { width: 34px; height: 34px; }
    .credit { position: absolute; right: 0; bottom: 0; display: flex; gap: 2px; font: 20px/26px Roboto, sans-serif; }
    .credit > * { background: #b3b7be; color: #000; padding: 2px 11px 0; text-decoration: none; border: 0; font: inherit; margin: 0; }
  </style>
  <svg class="map" viewBox="477 1233 2140 636" preserveAspectRatio="xMidYMid slice" role="img" aria-label="Map of Waterloo">
    <g transform="translate(460 1220) scale(${SX} ${SY})">
      <path class="field" d="M176 560L218 532 260 635 242 660 206 665zM227 530L247 486 270 488 298 468 346 610 328 614 322 622 280 638 268 630z"/>
    </g>
    <g transform="translate(1900 1220) scale(${SX} ${SY})">
      <path class="water" stroke-width="7" d="M150 20L172 160 226 350 202 530 165 590Q100 680 90 715L138 885Q170 930 205 965L290 1040 430 1165 445 1200 505 1238Q540 1290 520 1320L430 1480 390 1560"/>
    </g>
    ${roadLayer()}
    <g class="names">
      ${streets.map(streetLabel).join('')}
      <text class="city" x="1494" y="1280" text-anchor="middle" font-size="31">Waterloo</text>
      <text x="582" y="1302" text-anchor="end" font-size="26">chnology</text>
      <text x="505" y="1827" font-size="26">University Of Waterloo</text>
      <text class="brand" x="496" y="1853" font-size="36">Google</text>
    </g>
    <svg class="stop" x="588" y="1276" width="34" height="34" viewBox="0 0 32 32">${icons.rail}</svg>
    <svg class="stop" x="770" y="1801" width="34" height="34" viewBox="0 0 32 32">${icons.rail}</svg>
  </svg>
  <button class="marker a">A</button>
  <button class="marker b">B</button>
  <div class="hint">Click map to place Location A</div>
  <div class="zoom">
    <button aria-label="Zoom in"><svg viewBox="0 0 34 34"><path stroke="#666" stroke-width="4" d="M17 1v32M1 17h32"/></svg></button>
    <button aria-label="Zoom out"><svg viewBox="0 0 34 34"><path stroke="#666" stroke-width="4" d="M1 17h32"/></svg></button>
  </div>
  <div class="credit"><button>Keyboard shortcuts</button><span>Map data ©2026 Google</span><a href="#">Terms</a><a href="#">Report a map error</a></div>`);
</script>
</body>
</html>
